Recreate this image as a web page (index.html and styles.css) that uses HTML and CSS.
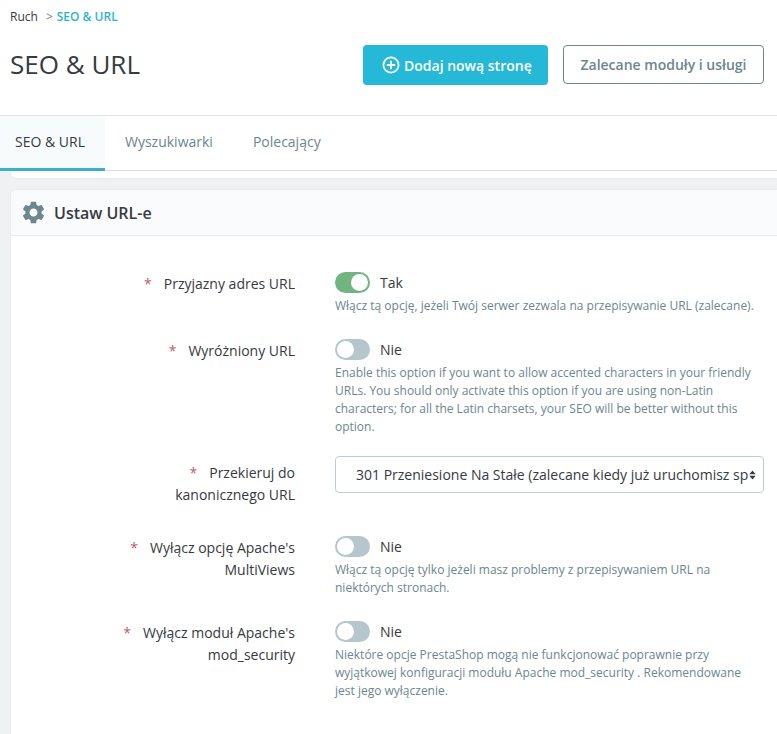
FILE: index.html
```html
<!DOCTYPE html>
<html lang="pl">
<head>
    <meta charset="UTF-8">
    <meta name="viewport" content="width=device-width, initial-scale=1.0">
    <title>SEO &amp; URL</title>
    <link rel="stylesheet" href="styles.css">
</head>
<body>
    <header class="page-head">
        <div class="breadcrumb">
            <span>Ruch</span>
            <span class="breadcrumb-sep">&gt;</span>
            <span class="breadcrumb-current">SEO &amp; URL</span>
        </div>
        <div class="title-row">
            <h1>SEO &amp; URL</h1>
            <div class="toolbar">
                <a class="btn btn-primary">
                    <svg class="btn-icon" viewBox="0 0 18 18" width="18" height="18">
                        <circle cx="9" cy="9" r="7.6" fill="none" stroke="#fff" stroke-width="1.7"/>
                        <path d="M9 4.8v8.4M4.8 9h8.4" stroke="#fff" stroke-width="1.8" fill="none"/>
                    </svg>
                    Dodaj nową stronę
                </a>
                <a class="btn btn-outline">Zalecane moduły i usługi</a>
            </div>
        </div>
    </header>

    <nav class="tabs">
        <a class="tab active">SEO &amp; URL</a>
        <a class="tab">Wyszukiwarki</a>
        <a class="tab">Polecający</a>
    </nav>

    <main class="content">
        <div class="card-stub"></div>
        <section class="card">
            <div class="card-head">
                <svg class="gear" viewBox="0 0 24 24" width="27" height="27">
                    <path fill="#6c868e" d="M19.14 12.94c.04-.3.06-.61.06-.94 0-.32-.02-.64-.07-.94l2.03-1.58c.18-.14.23-.41.12-.61l-1.92-3.32c-.12-.22-.37-.29-.59-.22l-2.39.96c-.5-.38-1.03-.7-1.62-.94l-.36-2.54c-.04-.24-.24-.41-.48-.41h-3.84c-.24 0-.43.17-.47.41l-.36 2.54c-.59.24-1.13.57-1.62.94l-2.39-.96c-.22-.08-.47 0-.59.22L2.74 8.87c-.12.21-.08.47.12.61l2.03 1.58c-.05.3-.09.63-.09.94s.02.64.07.94l-2.03 1.58c-.18.14-.23.41-.12.61l1.92 3.32c.12.22.37.29.59.22l2.39-.96c.5.38 1.03.7 1.62.94l.36 2.54c.05.24.24.41.48.41h3.84c.24 0 .44-.17.47-.41l.36-2.54c.59-.24 1.13-.56 1.62-.94l2.39.96c.22.08.47 0 .59-.22l1.92-3.32c.12-.22.07-.47-.12-.61l-2.01-1.58zM12 15.6c-1.98 0-3.6-1.62-3.6-3.6s1.62-3.6 3.6-3.6 3.6 1.62 3.6 3.6-1.62 3.6-3.6 3.6z"/>
                </svg>
                <h2>Ustaw URL-e</h2>
            </div>
            <div class="card-body">
                <div class="form-row row-friendly">
                    <label class="form-label"><span class="req">*</span>Przyjazny adres URL</label>
                    <div class="form-field">
                        <div class="switch-line">
                            <span class="switch on"></span>
                            <span>Tak</span>
                        </div>
                        <p class="help">Włącz tą opcję, jeżeli Twój serwer zezwala na przepisywanie URL (zalecane).</p>
                    </div>
                </div>
                <div class="form-row row-accented">
                    <label class="form-label"><span class="req">*</span>Wyróżniony URL</label>
                    <div class="form-field">
                        <div class="switch-line">
                            <span class="switch"></span>
                            <span>Nie</span>
                        </div>
                        <p class="help">Enable this option if you want to allow accented characters in your friendly URLs. You should only activate this option if you are using non-Latin characters; for all the Latin charsets, your SEO will be better without this option.</p>
                    </div>
                </div>
                <div class="form-row row-canonical">
                    <label class="form-label label-select"><span class="req">*</span>Przekieruj do<br>kanonicznego URL</label>
                    <div class="form-field">
                        <div class="select-box">
                            <select class="select-input" title="Przekieruj do kanonicznego URL">
                                <option>301 Przeniesione Na Stałe (zalecane kiedy już uruchomisz sprzedaż)</option>
                                <option>302 Przeniesione Tymczasowo</option>
                                <option>Brak przekierowania</option>
                            </select>
                            <svg class="select-arrows" viewBox="0 0 8 12" width="7" height="10">
                                <path fill="#363a41" d="M4 0.500 7.800 5H0.200zM4 11.500 0.200 7h7.600z"/>
                            </svg>
                        </div>
                    </div>
                </div>
                <div class="form-row row-multiviews">
                    <label class="form-label"><span class="req">*</span>Wyłącz opcję Apache's<br>MultiViews</label>
                    <div class="form-field">
                        <div class="switch-line">
                            <span class="switch"></span>
                            <span>Nie</span>
                        </div>
                        <p class="help">Włącz tą opcję tylko jeżeli masz problemy z przepisywaniem URL na niektórych stronach.</p>
                    </div>
                </div>
                <div class="form-row">
                    <label class="form-label"><span class="req">*</span>Wyłącz moduł Apache's<br>mod_security</label>
                    <div class="form-field">
                        <div class="switch-line">
                            <span class="switch"></span>
                            <span>Nie</span>
                        </div>
                        <p class="help">Niektóre opcje PrestaShop mogą nie funkcjonować poprawnie przy wyjątkowej konfiguracji modułu Apache mod_security . Rekomendowane jest jego wyłączenie.</p>
                    </div>
                </div>
            </div>
        </section>
    </main>
</body>
</html>
```

FILE: styles.css
```css
/* Page base */
body {
    margin: 0;
    height: 100vh;
    display: flex;
    flex-direction: column;
    overflow: hidden;
    font-family: "Open Sans", "Liberation Sans", sans-serif;
    font-size: 14px;
    color: #363a41;
    background-color: #eff1f2;
}

/* Header with breadcrumb and title */
.page-head {
    height: 115px;
    padding: 0 13px 0 10px;
    background-color: #fff;
    border-bottom: 1px solid #e2e4e6;
}

.breadcrumb {
    display: flex;
    padding-top: 9px;
    font-size: 12px;
    line-height: 16px;
}

.breadcrumb-sep {
    margin: 0 4px 0 8px;
    color: #6c868e;
}

.breadcrumb-current {
    color: #2fb3cb;
    font-weight: 600;
}

.title-row {
    display: flex;
    justify-content: space-between;
    align-items: flex-start;
    margin-top: 20px;
}

h1 {
    margin: 0;
    font-size: 26px;
    line-height: 38px;
    font-weight: 400;
}

.toolbar {
    display: flex;
    gap: 15px;
}

/* Buttons */
.btn {
    display: flex;
    align-items: center;
    box-sizing: border-box;
    height: 40px;
    font-size: 14px;
    font-weight: 600;
    border-radius: 4px;
}

.btn-primary {
    width: 185px;
    padding-left: 19px;
    color: #fff;
    background-color: #25b9d7;
    white-space: nowrap;
}

.btn-icon {
    margin-right: 4px;
}

.btn-outline {
    width: 201px;
    height: 39px;
    justify-content: center;
    color: #6c868e;
    background-color: #fff;
    border: 1px solid #6c868e;
}

/* Tabs */
.tabs {
    display: flex;
    height: 54px;
    background-color: #fff;
    border-bottom: 1px solid #dfe3e5;
}

.tab {
    box-sizing: border-box;
    height: 55px;
    padding: 0 20px;
    font-size: 14px;
    line-height: 52px;
    color: #6c868e;
}

.tab.active {
    width: 105px;
    padding: 0 15px;
    color: #363a41;
    background-color: #f7fbfc;
    border-bottom: 3px solid #3bb2c9;
}

/* Content area */
.content {
    flex: 1;
    display: flex;
    flex-direction: column;
    min-height: 0;
    padding-left: 11px;
}

.card-stub {
    height: 7px;
    background-color: #fff;
    border-radius: 0 0 0 5px;
    box-shadow: 0 0 3px rgba(0, 0, 0, 0.06);
}

.card {
    flex: 1;
    min-height: 0;
    margin-top: 12px;
    background-color: #fff;
    border-radius: 5px 0 0 0;
    box-shadow: 0 0 3px rgba(0, 0, 0, 0.06);
}

.card-head {
    display: flex;
    align-items: center;
    height: 45px;
    padding-left: 9px;
    background-color: #fafbfc;
    border-bottom: 1px solid #e4e7e9;
    border-radius: 5px 0 0 0;
}

.gear {
    margin-right: 7px;
}

h2 {
    margin: 0;
    font-size: 16px;
    font-weight: 600;
    color: #363a41;
}

.card-body {
    padding-top: 36px;
}

/* Form rows */
.form-row {
    display: flex;
    margin-bottom: 25px;
}

.row-friendly {
    margin-bottom: 24px;
}

.row-accented {
    margin-bottom: 20px;
}

.row-canonical {
    margin-bottom: 30px;
}

.row-multiviews {
    margin-bottom: 24px;
}

.form-label {
    width: 284px;
    flex-shrink: 0;
    padding-top: 1px;
    font-size: 14px;
    line-height: 22px;
    text-align: right;
}

.label-select {
    padding-top: 6px;
}

.req {
    margin-right: 12px;
    color: #c05c67;
}

.form-field {
    width: 429px;
    margin-left: 40px;
}

.switch-line {
    display: flex;
    align-items: center;
    gap: 10px;
    height: 21px;
    font-size: 14px;
}

.switch {
    position: relative;
    width: 35px;
    height: 21px;
    border-radius: 11px;
    background-color: #b6c6cd;
}

.switch::after {
    content: "";
    position: absolute;
    top: 2px;
    left: 2px;
    width: 17px;
    height: 17px;
    border-radius: 50%;
    background-color: #fff;
}

.switch.on {
    background-color: #70b580;
}

.switch.on::after {
    left: 16px;
}

.help {
    max-width: 425px;
    margin: 4px 0 0;
    font-size: 12px;
    line-height: 18px;
    color: #6c868e;
}

/* Select */
.select-box {
    position: relative;
    height: 37px;
}

.select-input {
    display: block;
    width: 100%;
    height: 100%;
    padding: 0 15px 0 20px;
    font-family: inherit;
    font-size: 14px;
    color: #363a41;
    background-color: #fff;
    border: 1px solid #bbcdd2;
    border-radius: 4px;
    appearance: none;
}

.select-arrows {
    position: absolute;
    top: 14px;
    right: 8px;
}
```
